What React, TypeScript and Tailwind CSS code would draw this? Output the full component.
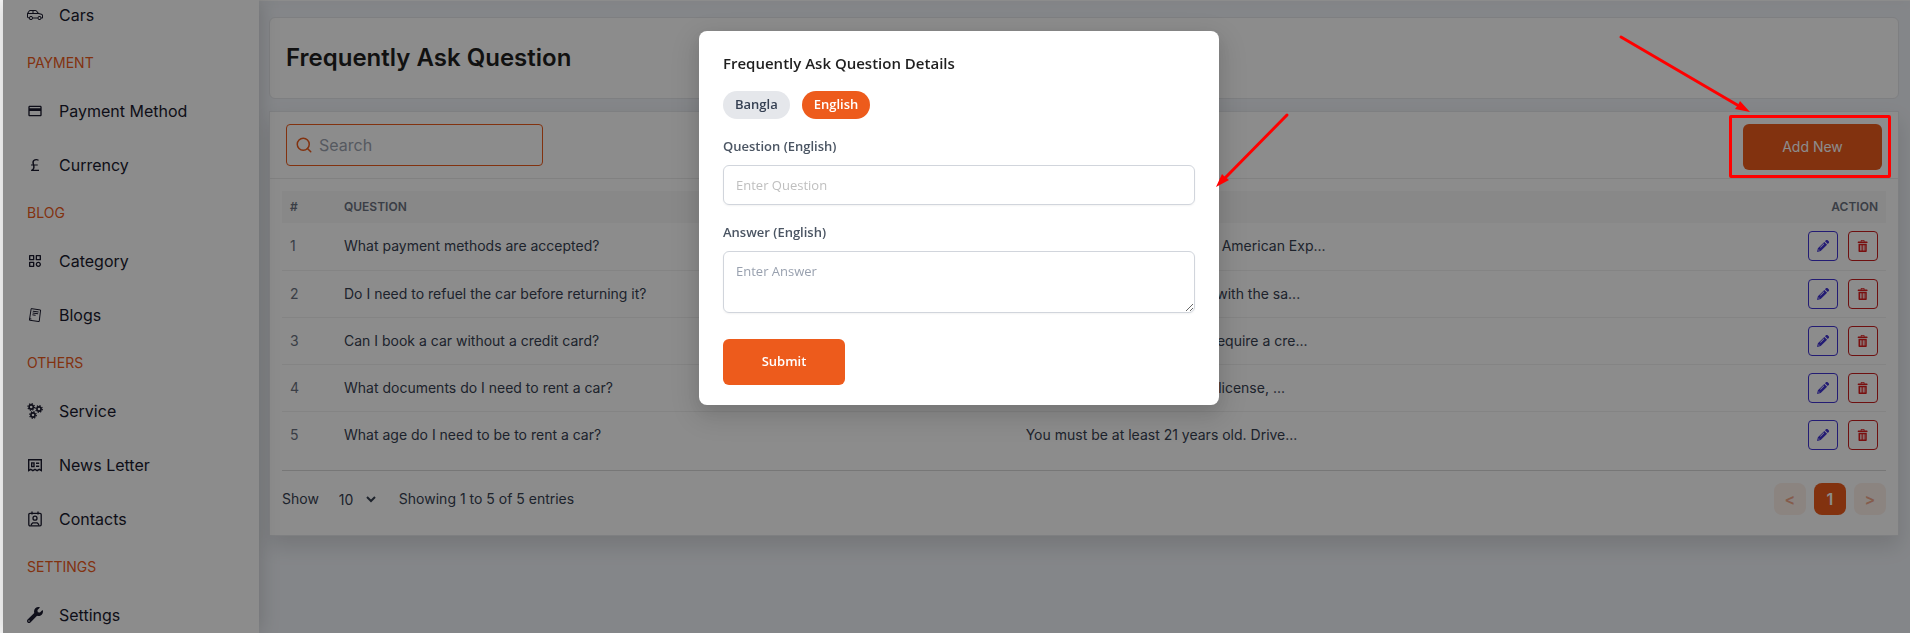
import { ReactNode, useState } from 'react';
import { LiaCarSideSolid } from 'react-icons/lia';
import { MdPayment } from 'react-icons/md';
import { BsCurrencyPound } from 'react-icons/bs';
import { BiCategory } from 'react-icons/bi';
import { FaWrench } from 'react-icons/fa';
import { FiSearch } from 'react-icons/fi';
import { ImBin } from 'react-icons/im';

function BlogIcon() {
  return (
    <svg viewBox="0 0 16 16" className="w-4 h-4" fill="none" stroke="currentColor" strokeWidth="1">
      <path d="M4.2 1.6 13.6 3 12.2 14.6 2.4 13.2Z" />
      <path d="M2.6 11.8 4.4 12 M5.8 4.2 11.6 5 M5.6 6 11.2 6.8 M5.4 7.8 8.6 8.3" />
    </svg>
  );
}

function GearsIcon() {
  const gears = [
    { x: 4.2, y: 4 },
    { x: 12, y: 6 },
    { x: 6, y: 12 },
  ];
  return (
    <svg viewBox="0 0 16 16" className="w-4 h-4" fill="none" stroke="currentColor">
      {gears.map((gear) => (
        <g key={gear.x}>
          <circle cx={gear.x} cy={gear.y} r="2.1" strokeWidth="1.6" />
          <circle cx={gear.x} cy={gear.y} r="3.3" strokeWidth="1.2" strokeDasharray="1.3 1.29" />
        </g>
      ))}
    </svg>
  );
}

function NewsIcon() {
  return (
    <svg viewBox="0 0 16 16" className="w-4 h-4" fill="none" stroke="currentColor" strokeWidth="1.4">
      <path d="M1.7 13.6V2.7H14.3V13.6L12.2 12.4 10.1 13.6 8 12.4 5.9 13.6 3.8 12.4Z" />
      <path d="M4.7 5.9H7V9.6H4.7Z M9 6.2H12.2 M9 9.2H12.2" />
    </svg>
  );
}

function ContactIcon() {
  return (
    <svg viewBox="0 0 16 16" className="w-4 h-4" fill="none" stroke="currentColor" strokeWidth="1.3">
      <rect x="1.8" y="2.4" width="12.4" height="12.4" rx="1.2" />
      <path d="M5 .6V3.4 M11 .6V3.4 M4.4 14.6V13.2L5.8 11.8H10.2L11.6 13.2V14.6" />
      <circle cx="8" cy="7.2" r="2" />
    </svg>
  );
}

function PencilIcon() {
  return (
    <svg viewBox="0 0 14 14" className="w-3.5 h-3.5" fill="currentColor">
      <path d="M9 2.2 11.8 5 12.7 4.1C13.2 3.6 13.2 2.8 12.7 2.3L11.7 1.3C11.2.8 10.4.8 9.9 1.3Z" />
      <path fillRule="evenodd" d="M8.3 2.9 11.1 5.7 4.7 12.1 1 13 1.9 9.3ZM2.8 10.3 2.3 11.7 3.7 11.2ZM7.7 4.6 4.1 8.2 4.6 8.7 8.2 5.1Z" />
    </svg>
  );
}

interface NavGroup {
  title: string;
  items: { label: string; icon: ReactNode }[];
}

const navGroups: NavGroup[] = [
  { title: '', items: [{ label: 'Cars', icon: <LiaCarSideSolid /> }] },
  {
    title: 'PAYMENT',
    items: [
      { label: 'Payment Method', icon: <MdPayment /> },
      { label: 'Currency', icon: <BsCurrencyPound /> },
    ],
  },
  {
    title: 'BLOG',
    items: [
      { label: 'Category', icon: <BiCategory /> },
      { label: 'Blogs', icon: <BlogIcon /> },
    ],
  },
  {
    title: 'OTHERS',
    items: [
      { label: 'Service', icon: <GearsIcon /> },
      { label: 'News Letter', icon: <NewsIcon /> },
      { label: 'Contacts', icon: <ContactIcon /> },
    ],
  },
  { title: 'SETTINGS', items: [{ label: 'Settings', icon: <FaWrench /> }] },
];

const faqs = [
  { question: 'What payment methods are accepted?', answer: 'We accept Visa, MasterCard, American Exp...' },
  { question: 'Do I need to refuel the car before returning it?', answer: 'Yes, you must return the car with the sa...' },
  { question: 'Can I book a car without a credit card?', answer: 'Yes, most rental companies require a cre...' },
  { question: 'What documents do I need to rent a car?', answer: "You will need a valid driver's license, ..." },
  { question: 'What age do I need to be to rent a car?', answer: 'You must be at least 21 years old. Drive...' },
];

function Sidebar() {
  return (
    <aside className="relative z-10 w-64 shrink-0 overflow-hidden bg-white shadow-[0_0_20px_rgba(0,0,0,0.18)]">
      {/* List is scrolled a little */}
      <nav className="-mt-3">
        {navGroups.map((group) => (
          <div key={group.title}>
            {group.title && (
              <h3 className="flex h-[42px] items-center pl-6 text-sm text-[#ed5b1c]">{group.title}</h3>
            )}
            {group.items.map((item) => (
              <a key={item.label} href="#" className="flex h-[54px] items-center gap-4 pl-6 text-base text-[#1a1a2e]">
                {item.icon}
                {item.label}
              </a>
            ))}
          </div>
        ))}
      </nav>
    </aside>
  );
}

function FaqTable() {
  return (
    <table className="w-full table-fixed text-left text-sm">
      <thead>
        <tr className="h-8 bg-[#f8f8f8] text-xs text-[#6b7280]">
          <th className="w-[54px] px-2 font-semibold">#</th>
          <th className="w-[42.5%] px-2 font-semibold">QUESTION</th>
          <th className="px-2 font-semibold">ANSWER</th>
          <th className="w-40 px-2 text-right font-semibold">ACTION</th>
        </tr>
      </thead>
      <tbody>
        {faqs.map((faq, index) => (
          <tr key={faq.question} className="h-[47px] border-b border-[#f0f0f0] last:border-0">
            <td className="px-2 text-[#6b7280]">{index + 1}</td>
            <td className="px-2 text-[#374151]">{faq.question}</td>
            <td className="px-2 text-[#374151]">{faq.answer}</td>
            <td className="px-2">
              <div className="flex justify-end gap-2.5">
                <button aria-label="Edit" className="flex h-[30px] w-[30px] items-center justify-center rounded border border-[#4133d3] text-[#4133d3]">
                  <PencilIcon />
                </button>
                <button aria-label="Delete" className="flex h-[30px] w-[30px] items-center justify-center rounded border border-[#c81e1e] text-xs text-[#dc1c1c]">
                  <ImBin />
                </button>
              </div>
            </td>
          </tr>
        ))}
      </tbody>
    </table>
  );
}

function Pagination() {
  return (
    <div className="mt-3 flex items-center justify-between border-t border-[#d9d9d9] pt-3 text-sm text-[#374151]">
      <div className="flex items-center">
        <label htmlFor="page-size">Show</label>
        <select id="page-size" className="ml-4 w-11 bg-transparent text-sm">
          <option>10</option>
          <option>20</option>
        </select>
        <span className="ml-5">Showing 1 to 5 of 5 entries</span>
      </div>
      <div className="flex gap-2 text-base font-semibold">
        <button disabled className="h-8 w-8 rounded-lg bg-[#fdf0ea] text-[#f2a88a]">{'<'}</button>
        <button className="h-8 w-8 rounded-lg bg-[#ed5b1c] text-white">1</button>
        <button disabled className="h-8 w-8 rounded-lg bg-[#fdf0ea] text-[#f2a88a]">{'>'}</button>
      </div>
    </div>
  );
}

function FaqModal() {
  const [language, setLanguage] = useState('English');

  return (
    <div className="fixed inset-y-0 right-0 left-[3px] z-20 flex items-start justify-center bg-black/45 pt-[31px] pl-[5px] font-['Open_Sans',sans-serif]">
      <form
        role="dialog"
        aria-label="Frequently Ask Question Details"
        onSubmit={(e) => e.preventDefault()}
        className="w-[520px] rounded-lg bg-white px-6 py-5 shadow-[0_6px_16px_rgba(0,0,0,0.08),0_9px_28px_8px_rgba(0,0,0,0.1)]"
      >
        <h2 className="text-[15px] leading-6 font-semibold text-[#1f1f1f]">Frequently Ask Question Details</h2>

        <div className="mt-4 flex gap-3 text-[13px] font-semibold">
          {['Bangla', 'English'].map((name) => (
            <button
              key={name}
              type="button"
              onClick={() => setLanguage(name)}
              className={`h-7 rounded-full px-3 ${name === language ? 'bg-[#ed5b1c] text-white' : 'bg-gray-200 text-gray-700'}`}
            >
              {name}
            </button>
          ))}
        </div>

        <label htmlFor="question" className="mt-4 block text-[13px] leading-[22px] font-semibold text-[#4b5563]">
          Question ({language})
        </label>
        <input
          id="question"
          placeholder="Enter Question"
          className="mt-2 block h-10 w-full rounded-md border border-gray-300 px-3 text-[13px] shadow-xs placeholder:text-[#bfbfbf]"
        />

        <label htmlFor="answer" className="mt-4 block text-[13px] leading-[22px] font-semibold text-[#4b5563]">
          Answer ({language})
        </label>
        <textarea
          id="answer"
          placeholder="Enter Answer"
          className="mt-2 block h-[62px] w-full rounded-md border border-gray-300 px-3 py-2.5 text-[13px] shadow-xs placeholder:text-gray-400"
        />

        <button type="submit" className="mt-[26px] block h-[46px] w-[122px] rounded-md bg-[#ed5b1c] text-[13px] font-semibold text-white">
          Submit
        </button>
      </form>
    </div>
  );
}

// Red arrows of the walkthrough, drawn above the mask
function GuideArrows() {
  return (
    <>
      <svg className="absolute top-[110px] left-[1210px] z-30 h-20 w-20" viewBox="0 0 80 80">
        <path d="M77 5 15 68" stroke="#f00" strokeWidth="3" strokeLinecap="round" />
        <path d="M6 77 12 64 15 67 19 70Z" fill="#f00" />
      </svg>
      <svg className="absolute top-[30px] right-[155px] z-30 h-[90px] w-[140px]" viewBox="0 0 140 90">
        <path d="M6 7 124 76" stroke="#f00" strokeWidth="3" strokeLinecap="round" />
        <path d="M135 82 120 79 123 75 125 71Z" fill="#f00" />
      </svg>
    </>
  );
}

export default function App() {
  return (
    <div className="relative flex h-screen overflow-hidden bg-[#f1f4f9] pl-[3px] font-['Inter',sans-serif]">
      <div className="absolute inset-y-0 left-0 w-[3px] bg-[#f9f9f9]" />
      <Sidebar />
      <main className="min-w-0 flex-1">
        <header className="h-px bg-white shadow-[0_2px_10px_rgba(0,0,0,0.15)]" />

        <div className="pt-4 pr-[11px] pl-2.5">
          <div className="rounded-md border border-[#e5e7eb] bg-white px-4 py-6">
            <h1 className="text-2xl font-semibold text-[#1f1f1f]">Frequently Ask Question</h1>
          </div>

          <section className="mt-3 border border-[#e5e7eb] bg-white shadow-[0_10px_20px_rgba(0,0,0,0.12)]">
            <div className="flex items-start justify-between border-b border-[#ebebeb] px-4 pt-3 pb-2">
              <div className="flex h-[42px] w-[257px] items-center gap-1.5 rounded border border-[#ed5b1c] px-2">
                <FiSearch className="h-[18px] w-[18px] shrink-0 text-[#ed5b1c]" />
                <input aria-label="Search" placeholder="Search" className="w-full bg-transparent text-base outline-none placeholder:text-[#9ca3af]" />
              </div>
              <button className="h-[46px] w-[139px] rounded-md bg-[#ed5b1c] text-sm text-white">Add New</button>
            </div>
            <div className="px-3 pt-3 pb-5">
              <FaqTable />
              <Pagination />
            </div>
          </section>
        </div>
      </main>

      <FaqModal />
      <GuideArrows />
      <div className="absolute top-[115px] right-[19px] z-30 h-[63px] w-[162px] rounded-xs border-3 border-[#f00]" />
    </div>
  );
}
